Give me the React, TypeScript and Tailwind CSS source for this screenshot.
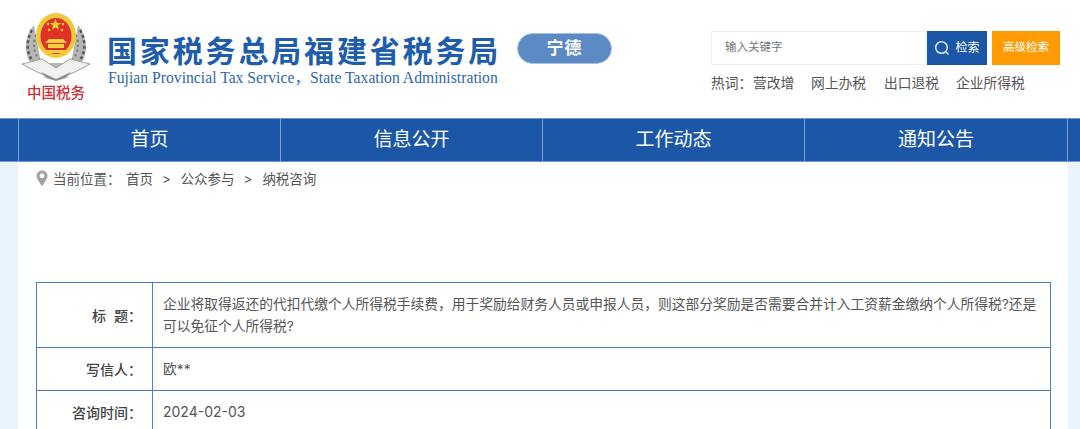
import React from "react";

const cjk = "font-['Inter','Noto_Sans_CJK_SC',sans-serif]";

function Emblem() {
  return (
    <svg width="70" height="92" viewBox="0 0 70 92" className="block">
      <path d="M13 12 C1 26 2 50 20 60 L50 60 C68 50 69 26 57 12 L50 50 L20 50 Z" fill="#b4b6b5" />
      <path d="M11 17 C4 29 5 45 18 55 M59 17 C66 29 65 45 52 55" fill="none" stroke="#55585a" strokeWidth="2.500" strokeDasharray="3 2.500" />
      <path d="M15 22 C11 32 13 42 21 49 M55 22 C59 32 57 42 49 49" fill="none" stroke="#77797a" strokeWidth="2" strokeDasharray="2 3" />
      <path d="M1 51 L21 46 L35 55 L49 46 L69 51 L54 59 L35 67 L16 59 Z" fill="#f0f0ee" stroke="#a2a2a0" strokeWidth="1" />
      <path d="M20 59 L35 66 L50 59 L45 65 L35 68 L25 65 Z" fill="#8f908f" />
      <ellipse cx="35" cy="22.500" rx="20" ry="22.500" fill="#f0ca36" />
      <ellipse cx="35" cy="23" rx="15.500" ry="18" fill="#e0302a" />
      <path d="M34.500 6 l1.500 4 4.300 0 -3.500 2.600 1.300 4.200 -3.600 -2.500 -3.600 2.500 1.300 -4.200 -3.500 -2.600 4.300 0 Z" fill="#f7d62e" />
      <circle cx="27" cy="11" r="1.200" fill="#f7d62e" />
      <circle cx="42" cy="11" r="1.200" fill="#f7d62e" />
      <circle cx="28" cy="17" r="1.200" fill="#f7d62e" />
      <circle cx="41" cy="17" r="1.200" fill="#f7d62e" />
      <path d="M24 30 H46 L42 26 H28 Z M27 31 H43 V35 H27 Z" fill="#f3cf3d" />
      <path d="M23 37 H47 V40 H23 Z" fill="#f3cf3d" />
      <text x="35" y="85" textAnchor="middle" fontSize="14.500" fontFamily="'Noto Sans CJK SC',sans-serif" fontWeight="500" fill="#c8303a">中国税务</text>
    </svg>
  );
}

function SearchIcon() {
  return (
    <svg width="16" height="16" viewBox="0 0 16 16" fill="none" stroke="#dbe7f5" strokeWidth="1.500">
      <circle cx="7.500" cy="7.500" r="5.800" />
      <path d="M11.800 11.800 L14.500 14.500" />
    </svg>
  );
}

function Pin() {
  return (
    <svg width="12" height="17" viewBox="0 0 12 17" className="shrink-0">
      <path fillRule="evenodd" d="M6 0.500 C2.800 0.500 0.500 2.900 0.500 5.800 C0.500 9.500 4.500 13.500 6 16.500 C7.500 13.500 11.500 9.500 11.500 5.800 C11.500 2.900 9.200 0.500 6 0.500 Z M6 3.400 A2.400 2.400 0 1 1 6 8.200 A2.400 2.400 0 1 1 6 3.400 Z" fill="#a3a3a3" />
    </svg>
  );
}

function Row({ label, children, className }: { label: React.ReactNode; children: React.ReactNode; className: string }) {
  return (
    <div className={`flex border-b border-[#4a7fc4] ${className}`}>
      <div className="flex w-[116px] shrink-0 items-center justify-end whitespace-pre border-r border-[#4a7fc4] pr-[10px] text-[14px] font-medium text-[#444]">
        {label}
      </div>
      <div className="flex flex-1 items-center pl-[10px] pr-[8px] text-[13.750px] leading-[22px] text-[#555]">
        <div>{children}</div>
      </div>
    </div>
  );
}

export default function App() {
  const nav = ["首页", "信息公开", "工作动态", "通知公告"];
  return (
    <div className={`h-[429px] w-[1080px] overflow-hidden bg-[#e8f3fb] ${cjk}`}>
      <header className="flex h-[118px] bg-white">
        <div className="ml-[21px] mt-[13px] w-[70px]">
          <Emblem />
        </div>
        <div className="ml-[16px] mt-[30px] w-[392px]">
          <div className="whitespace-nowrap text-[30px] font-bold leading-[38px] tracking-[2.850px] text-[#1e5dab] font-['Noto_Sans_CJK_SC',sans-serif]">
            国家税务总局福建省税务局
          </div>
          <div className="mt-[1px] whitespace-nowrap pl-[1px] text-[15.650px] leading-[18px] tracking-[0.020px] text-[#2d68b2] font-['Liberation_Serif','Noto_Sans_CJK_SC',serif]">
            Fujian Provincial Tax Service，State Taxation Administration
          </div>
        </div>
        <div className="ml-[18px] mt-[33px] flex h-[31px] w-[95px] items-center justify-center rounded-full border border-[#a9c2e2] bg-[#5b8ac4] text-[17px] font-bold tracking-[1px] text-white">
          宁德
        </div>
        <div className="ml-[99px] mt-[31px] w-[350px]">
          <div className="flex h-[34px]">
            <div className="flex w-[216px] items-center border border-[#eeeeee] pl-[13px] text-[11.500px] text-[#777]">
              输入关键字
            </div>
            <div className="flex w-[60px] items-center justify-center gap-[5px] bg-[#1b57a6] text-[12px] text-white">
              <SearchIcon />
              检索
            </div>
            <div className="ml-[5px] flex w-[68px] items-center justify-center bg-[#ff9c05] text-[11.500px] text-white">
              高级检索
            </div>
          </div>
          <div className="mt-[8px] flex text-[13.750px] leading-[20px] text-[#555]">
            <span className="w-[42px]">热词：</span>
            <span className="w-[58px]">营改增</span>
            <span className="w-[73px]">网上办税</span>
            <span className="w-[72px]">出口退税</span>
            <span>企业所得税</span>
          </div>
        </div>
      </header>
      <nav className="h-[44px] border-y border-y-[#6f97cc] bg-[#1b57a6]">
        <div className="ml-[18px] grid h-full w-[1050px] grid-cols-4 border-x border-[#7fa3d3]">
          {nav.map((n, i) => (
            <div key={n} className={`flex items-center justify-center text-[19px] text-white ${i < 3 ? "border-r border-[#7fa3d3]" : ""}`}>
              {n}
            </div>
          ))}
        </div>
      </nav>
      <main className="ml-[18px] h-[267px] w-[1050px] bg-white pl-[18px] pr-[17px]">
        <div className="flex h-[120px] items-start pt-[8px] text-[13.500px] leading-[18px] text-[#555]">
          <Pin />
          <span className="ml-[5px]">当前位置：</span>
          <span className="ml-[5.500px]">首页</span>
          <span className="ml-[9px]">&gt;</span>
          <span className="ml-[9.500px]">公众参与</span>
          <span className="ml-[9px]">&gt;</span>
          <span className="ml-[10px]">纳税咨询</span>
        </div>
        <div className="border-x border-t border-[#4a7fc4]">
          <Row
            label={
              <>
                标<span className="inline-block w-[8px]" />题：
              </>
            }
            className="h-[65px]"
          >
            企业将取得返还的代扣代缴个人所得税手续费，用于奖励给财务人员或申报人员，则这部分奖励是否需要合并计入工资薪金缴纳个人所得税?还是可以免征个人所得税?
          </Row>
          <Row label="写信人：" className="h-[43px]">欧**</Row>
          <Row label="咨询时间：" className="h-[43px]">
            <span className="text-[14px]">2024-02-03</span>
          </Row>
        </div>
      </main>
    </div>
  );
}
